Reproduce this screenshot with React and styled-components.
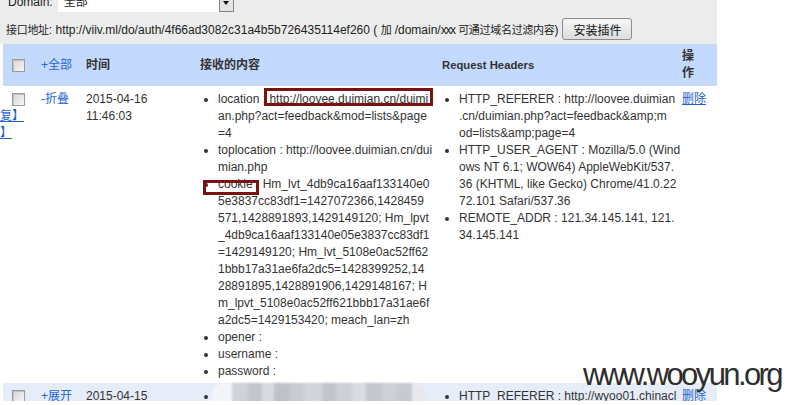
import React from "react";
import styled, { createGlobalStyle } from "styled-components";

const GlobalStyle = createGlobalStyle`
  html, body {
    margin: 0;
    background: #fff;
  }
  body {
    font-family: "Liberation Sans", Arial, "Noto Sans CJK SC", sans-serif;
    font-size: 12px;
    color: #333;
  }
`;

const columns = [
  { w: 32, pl: 9, pr: 0 },
  { w: 45, pl: 6, pr: 0 },
  { w: 115, pl: 6, pr: 10 },
  { w: 242, pl: 5, pr: 0 },
  { w: 240, pl: 5, pr: 0 },
  { w: 40, pl: 5, pr: 12 },
];

const rows = [
  {
    toggle: "-折叠",
    time: "2015-04-16\n11:46:03",
    links: [
      { text: "【回复】", shift: -36 },
      { text: "【删除】", shift: -48 },
    ],
    content: [
      {
        name: "location",
        value: "http://loovee.duimian.cn/duimi\nan.php?act=feedback&mod=lists&page\n=4",
        markValue: true,
      },
      { name: "toplocation", value: "http://loovee.duimian.cn/dui\nmian.php" },
      {
        name: "cookie",
        markName: true,
        value:
          "Hm_lvt_4db9ca16aaf133140e0\n5e3837cc83df1=1427072366,1428459\n571,1428891893,1429149120; Hm_lpvt\n_4db9ca16aaf133140e05e3837cc83df1\n=1429149120; Hm_lvt_5108e0ac52ff62\n1bbb17a31ae6fa2dc5=1428399252,14\n28891895,1428891906,1429148167; H\nm_lpvt_5108e0ac52ff621bbb17a31ae6f\na2dc5=1429153420; meach_lan=zh",
      },
      { name: "opener", value: "" },
      { name: "username", value: "" },
      { name: "password", value: "" },
    ],
    headers: [
      {
        name: "HTTP_REFERER",
        value: "http://loovee.duimian\n.cn/duimian.php?act=feedback&amp;m\nod=lists&amp;page=4",
      },
      {
        name: "HTTP_USER_AGENT",
        value:
          "Mozilla/5.0 (Wind\nows NT 6.1; WOW64) AppleWebKit/537.\n36 (KHTML, like Gecko) Chrome/41.0.22\n72.101 Safari/537.36",
      },
      { name: "REMOTE_ADDR", value: "121.34.145.141, 121.\n34.145.141" },
    ],
  },
  {
    toggle: "+展开",
    time: "2015-04-15\n09:12:40",
    hidden: true,
    links: [],
    content: [],
    headers: [
      { name: "HTTP_REFERER", value: "http://wyoo01.chinacl\noud.com/index.php" },
    ],
  },
];

const mosaic = [
  { w: 14, c: "#f4f5f8" },
  { w: 16, c: "#cfd2d9" },
  { w: 14, c: "#c3c6ce" },
  { w: 12, c: "#d8dae0" },
  { w: 16, c: "#bfc2ca" },
  { w: 14, c: "#c9ccd3" },
  { w: 18, c: "#d3d5db" },
  { w: 14, c: "#c1c4cc" },
  { w: 16, c: "#cdd0d7" },
  { w: 14, c: "#d9dbe1" },
  { w: 16, c: "#c4c7cf" },
  { w: 14, c: "#ced1d8" },
  { w: 16, c: "#c7cad1" },
  { w: 14, c: "#e8e9ee" },
];

function App() {
  return (
    <>
      <GlobalStyle />
      <Frame>
        <Page>
          <Toolbar>
            <FilterRow>
              <span>Domain:</span>
              <Select>
                <SelectValue>全部</SelectValue>
                <SelectArrow />
              </Select>
            </FilterRow>
            <ApiRow>
              <span>
                <Cjk>接口地址</Cjk>: http://viiv.ml/do/auth/4f66ad3082c31a4b5b726435114ef260 ({" "}
                <Cjk>加</Cjk> /domain/<Narrow>xxx</Narrow> <Cjk>可通过域名过滤内容</Cjk>)
              </span>
              <Button>安装插件</Button>
            </ApiRow>
          </Toolbar>

          <Table>
            <thead>
              <tr>
                {["", "+全部", "时间", "接收的内容", "Request Headers", "操作"].map((label, i) => (
                  <Th key={i} $w={columns[i].w} $pl={columns[i].pl} $pr={columns[i].pr}>
                    {i === 0 ? (
                      <Check />
                    ) : i === 1 ? (
                      <Toggle>{label}</Toggle>
                    ) : i === 4 ? (
                      <HeadLatin>{label}</HeadLatin>
                    ) : (
                      label
                    )}
                  </Th>
                ))}
              </tr>
            </thead>
            <tbody>
              {rows.map((row, r) => (
                <Row key={r} $alt={r % 2 === 1}>
                  <Td $pl={columns[0].pl} $pr={columns[0].pr}>
                    <Check />
                    {row.links.map((l) => (
                      <SideLink key={l.text} $shift={l.shift}>
                        {l.text}
                      </SideLink>
                    ))}
                  </Td>
                  <Td $pl={columns[1].pl} $pr={columns[1].pr}>
                    <Toggle>{row.toggle}</Toggle>
                  </Td>
                  <Td $pl={columns[2].pl} $pr={columns[2].pr}>
                    <Time>{row.time}</Time>
                  </Td>
                  <Td $pl={columns[3].pl} $pr={columns[3].pr}>
                    <List $pad={18}>
                      {row.hidden ? (
                        <Item>
                          <Mosaic>
                            {mosaic.map((t, i) => (
                              <Tile key={i} $w={t.w} $c={t.c} />
                            ))}
                          </Mosaic>
                        </Item>
                      ) : (
                        row.content.map((f) => {
                          const [first, ...rest] = f.value.split("\n");
                          return (
                            <Item key={f.name}>
                              {f.markName ? (
                                <Mark $t={3} $b={-4} $l={-15} $r={0}>
                                  {f.name} :
                                </Mark>
                              ) : (
                                `${f.name} :`
                              )}
                              {" "}
                              {f.markValue ? (
                                <Mark $t={-4} $b={0} $l={-5} $r={-5}>
                                  {first}
                                </Mark>
                              ) : (
                                first
                              )}
                              {rest.length ? "\n" + rest.join("\n") : ""}
                            </Item>
                          );
                        })
                      )}
                    </List>
                  </Td>
                  <Td $pl={columns[4].pl} $pr={columns[4].pr}>
                    <List $pad={17}>
                      {row.headers.map((h) => (
                        <Item key={h.name}>
                          {h.name} : {h.value}
                        </Item>
                      ))}
                    </List>
                  </Td>
                  <Td $pl={columns[5].pl} $pr={columns[5].pr}>
                    <Action href="#">删除</Action>
                  </Td>
                </Row>
              ))}
            </tbody>
          </Table>
        </Page>
        <Watermark>www.wooyun.org</Watermark>
      </Frame>
    </>
  );
}

const Frame = styled.div`
  position: relative;
  width: 790px;
  height: 401px;
  overflow: hidden;
`;

const Page = styled.div`
  width: 717px;
`;

const Toolbar = styled.div`
  background: #ececec;
  margin-top: -8px;
  padding: 0 6px 3px 6px;
  color: #222;
`;

const FilterRow = styled.div`
  display: flex;
  align-items: center;
  gap: 5px;
  height: 20px;
  padding-left: 2px;
`;

const Select = styled.div`
  display: flex;
  width: 176px;
  height: 20px;
  background: #fff;
`;

const SelectValue = styled.div`
  flex: 1;
  padding-left: 6px;
  line-height: 20px;
`;

const SelectArrow = styled.div`
  width: 13px;
  height: 18px;
  border: 1px solid #858585;
  background: #e4e4e4;
  position: relative;
  &::after {
    content: "";
    position: absolute;
    left: 3px;
    top: 8px;
    border-left: 3.5px solid transparent;
    border-right: 3.5px solid transparent;
    border-top: 4px solid #111;
  }
`;

const ApiRow = styled.div`
  display: flex;
  align-items: center;
  gap: 4px;
  height: 24px;
  margin-top: 5px;
  white-space: nowrap;
`;

const Cjk = styled.span`
  font-size: 11px;
  letter-spacing: -0.3px;
`;

const Narrow = styled.span`
  letter-spacing: -1.3px;
`;

const Button = styled.button`
  height: 22px;
  padding: 0 10px;
  border: 1px solid #8c8c8c;
  border-radius: 3px;
  background: linear-gradient(#f7f7f7, #dddddd);
  font-family: "Liberation Sans", "Noto Sans CJK SC", sans-serif;
  font-size: 12px;
  color: #111;
`;

const Table = styled.table`
  margin-left: 3px;
  width: 714px;
  border-collapse: collapse;
  table-layout: fixed;
`;

const Th = styled.th`
  width: ${(p) => p.$w}px;
  height: 42px;
  box-sizing: border-box;
  padding: 0 ${(p) => p.$pr}px 0 ${(p) => p.$pl}px;
  background: #c4d9fe;
  text-align: left;
  vertical-align: middle;
  font-weight: bold;
  font-size: 12px;
  line-height: 17px;
  color: #333;
`;

const HeadLatin = styled.span`
  font-size: 11.3px;
`;

const Row = styled.tr`
  background: ${(p) => (p.$alt ? "#e6edf8" : "#fff")};
`;

const Td = styled.td`
  padding: 5px ${(p) => p.$pr}px 3px ${(p) => p.$pl}px;
  vertical-align: top;
  line-height: 17px;
  color: #333;
`;

const Check = styled.span`
  display: inline-block;
  vertical-align: middle;
  width: 11px;
  height: 11px;
  border: 1px solid #9c9c9c;
  background: linear-gradient(135deg, #d6d6d6, #f7f7f7);
  box-shadow: inset 1px 1px 0 #c2c2c2;
`;

const SideLink = styled.a`
  display: block;
  width: max-content;
  margin-left: ${(p) => p.$shift}px;
  color: #1f5fcf;
  text-decoration: underline;
`;

const Toggle = styled.span`
  color: #1f66d6;
  font-weight: normal;
  cursor: pointer;
`;

const Time = styled.div`
  white-space: pre;
`;

const List = styled.ul`
  margin: 0;
  padding-left: ${(p) => p.$pad}px;
  list-style: disc;
`;

const Item = styled.li`
  white-space: pre;
`;

const Mark = styled.span`
  position: relative;
  &::after {
    content: "";
    position: absolute;
    top: ${(p) => p.$t}px;
    bottom: ${(p) => p.$b}px;
    left: ${(p) => p.$l}px;
    right: ${(p) => p.$r}px;
    border: 3px solid #7a1212;
  }
`;

const Mosaic = styled.span`
  display: inline-flex;
  vertical-align: top;
  margin: -5px 0 0 -6px;
  height: 26px;
  padding-left: 6px;
  border-radius: 12px 12px 0 0;
  background: #f4f5f8;
  filter: blur(1px);
  overflow: hidden;
`;

const Tile = styled.span`
  width: ${(p) => p.$w}px;
  background: ${(p) => p.$c};
`;

const Action = styled.a`
  color: #1f5fcf;
  text-decoration: underline;
  white-space: nowrap;
`;

const Watermark = styled.div`
  position: absolute;
  left: 583px;
  top: 359px;
  font-family: "Liberation Sans", Arial, sans-serif;
  font-size: 31px;
  line-height: 31px;
  letter-spacing: -2.6px;
  color: #2e2e2e;
`;

export default App;
